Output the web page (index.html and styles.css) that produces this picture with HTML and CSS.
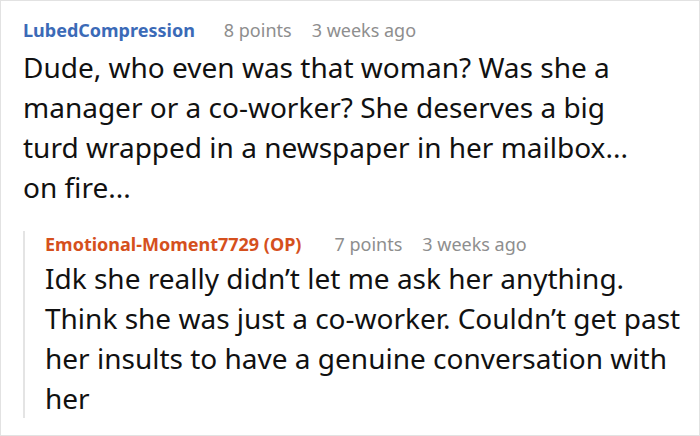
FILE: index.html
```html
<!DOCTYPE html>
<html>
<head>
<meta charset="utf-8">
<link rel="stylesheet" href="styles.css">
</head>
<body>
<div class="frame">
  <div class="comment">
    <div class="meta">
      <span class="user">LubedCompression</span>
      <span class="info">8 points</span>
      <span class="info">3 weeks ago</span>
    </div>
    <p class="body body-main">Dude, who even was that woman? Was she a manager or a co-worker? She deserves a big turd wrapped in a newspaper in her mailbox... on fire...</p>
    <div class="reply">
      <div class="meta meta-reply">
        <span class="user op">Emotional-Moment7729 (OP)</span>
        <span class="info">7 points</span>
        <span class="info">3 weeks ago</span>
      </div>
      <p class="body body-reply">Idk she really didn’t let me ask her anything. Think she was just a co-worker. Couldn’t get past her insults to have a genuine conversation with her</p>
    </div>
  </div>
</div>
</body>
</html>
```

FILE: styles.css
```css
html, body {
  margin: 0;
  padding: 0;
  background: #ffffff;
}
.frame {
  width: 700px;
  height: 436px;
  box-sizing: border-box;
  border: 1px solid #e2e2e2;
  overflow: hidden;
  font-family: "Noto Sans", sans-serif;
  color: #111111;
}
.comment {
  padding: 16px 6px 0 22px;
}
.meta {
  display: flex;
  gap: 29px;
  font-size: 18px;
  line-height: 26px;
}
.user {
  font-weight: 700;
  color: #3b6ab7;
}
.user.op {
  color: #d5501d;
}
.info {
  color: #8e8e8e;
}
.meta .info + .info {
  margin-left: -9px;
}
.meta-reply {
  gap: 33px;
  margin-top: -7px;
}
.meta-reply .info + .info {
  margin-left: -13px;
}
.body {
  margin: 0;
  font-size: 28px;
  line-height: 40px;
}
.body-main {
  max-width: 620px;
  padding-top: 4px;
}
.reply {
  margin-top: 31px;
  border-left: 2px solid #e4e4e4;
  padding-left: 20px;
}
.body-reply {
  padding-top: 1px;
  margin-bottom: -7px;
}
```
